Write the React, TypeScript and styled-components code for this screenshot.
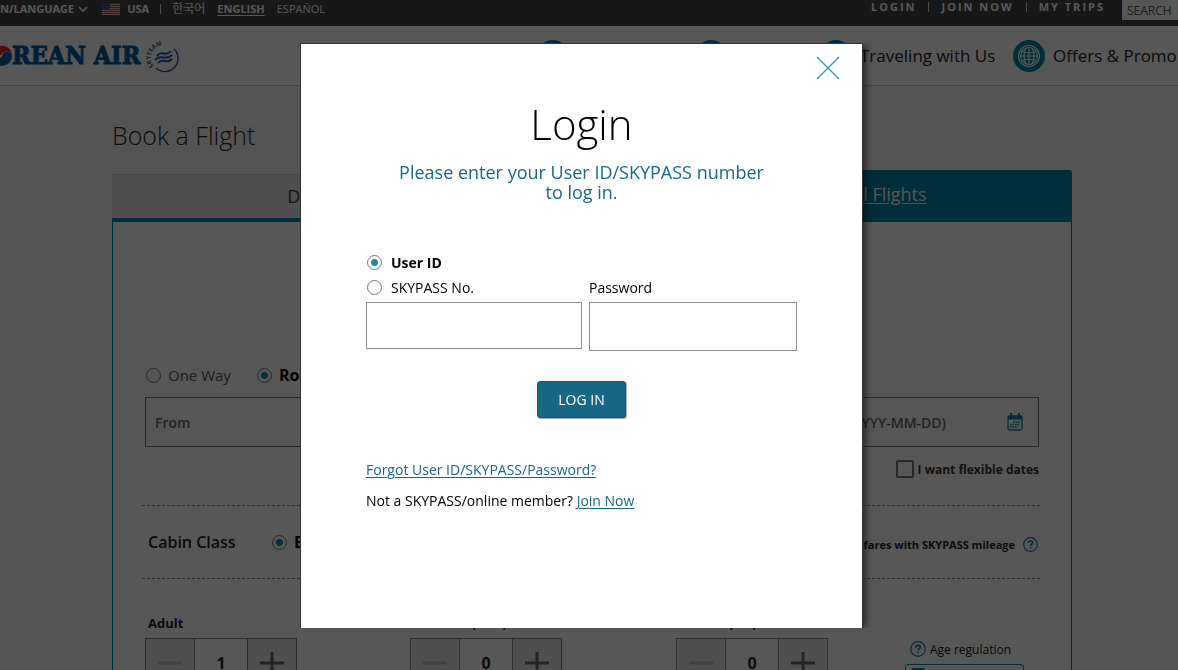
import React from "react";
import styled, { createGlobalStyle, css } from "styled-components";

const teal = "#0083a8";

const GlobalStyle = createGlobalStyle`
  *, *::before, *::after { box-sizing: border-box; }
  body {
    margin: 0;
    overflow: hidden;
    background: #f6f6f6;
    font-family: "Open Sans", "Noto Sans CJK KR", sans-serif;
    font-size: 14px;
    color: #222;
  }
  button, input { font-family: inherit; }
  h1, h2, p, ul, fieldset { margin: 0; padding: 0; border: 0; }
`;

const Page = styled.div`
  min-height: 100vh;
  overflow: hidden;
`;

/* Utility bar */
const TopBar = styled.div`
  display: flex;
  align-items: flex-start;
  height: 26px;
  background: #444;
  font-size: 11px;
  line-height: 18px;
  color: #fff;
  white-space: nowrap;
  overflow: hidden;
`;

const RegionButton = styled.button`
  display: flex;
  align-items: center;
  gap: 4px;
  padding: 0;
  margin-right: 14px;
  border: 0;
  background: none;
  color: inherit;
  font-size: 11px;
  font-weight: 700;
  line-height: 18px;
`;

const Country = styled.span`
  display: flex;
  align-items: center;
  gap: 7px;
  font-weight: 700;
`;

const Divider = styled.span<{ $space: number }>`
  width: 1px;
  height: 10px;
  margin: 4px ${(p) => p.$space}px 0;
  background: #ddd;
`;

const TopLink = styled.a<{ $active?: boolean }>`
  margin-right: 12px;
  color: inherit;
  font-weight: ${(p) => (p.$active ? 700 : 400)};
  text-decoration: ${(p) => (p.$active ? "underline" : "none")};
  text-underline-offset: 2px;
  &:lang(ko) { font-size: 12px; }
`;

const AccountLinks = styled.nav`
  display: flex;
  margin-left: auto;
  line-height: 14px;
`;

const AccountLink = styled.a`
  color: inherit;
  font-weight: 700;
  letter-spacing: 2px;
  text-decoration: none;
`;

const AccountDivider = styled(Divider)`
  margin-top: 2px;
`;

const Search = styled.input`
  width: 56px;
  height: 20px;
  margin-left: 17px;
  padding: 0 0 0 5px;
  border: 0;
  border-radius: 0;
  background: #fff;
  font-size: 12px;
  &::placeholder { color: #555; opacity: 1; }
`;

/* Header */
const Header = styled.header`
  display: flex;
  align-items: center;
  height: 60px;
  border-bottom: 1px solid #c4c4c4;
  background: #fff;
  overflow: hidden;
`;

const Logo = styled.a`
  display: flex;
  flex: none;
  align-items: center;
  width: 180px;
  color: #005a9e;
  font: 700 25px/30px "DejaVu Serif Condensed", "DejaVu Serif", serif;
  -webkit-text-stroke: 1px #005a9e;
  text-decoration: none;
  white-space: nowrap;
`;

const AllianceMark = styled.svg`
  margin-left: 6px;
  overflow: visible;
  -webkit-text-stroke: 0;
`;

const MainNav = styled.nav`
  display: grid;
  flex: none;
  grid-template-columns: 158px 125px 193px auto;
  margin-left: 357px;
`;

const NavLink = styled.a`
  display: flex;
  align-items: center;
  gap: 8px;
  color: #222;
  font-size: 17px;
  text-decoration: none;
  white-space: nowrap;
`;

/* Booking widget */
const Main = styled.main`
  padding: 30px 106px 0 112px;
`;

const PageTitle = styled.h1`
  height: 54px;
  font-size: 25px;
  font-weight: 300;
  line-height: 39px;
`;

const Tabs = styled.div`
  display: grid;
  grid-template-columns: 1fr 1fr;
  align-items: end;
  height: 52px;
`;

const Tab = styled.button<{ $filled?: boolean }>`
  border: 0;
  font-size: 18px;
  ${(p) =>
    p.$filled
      ? css`
          height: 52px;
          padding: 0 0 4px 22px;
          border-radius: 0 3px 0 0;
          background: ${teal};
          color: #fff;
          text-decoration: underline;
          text-underline-offset: 2px;
        `
      : css`
          height: 48px;
          padding: 0 0 2px 8px;
          border-top: 1px solid #dadada;
          border-bottom: 4px solid ${teal};
          background: #e7e7e7;
          color: #333;
        `}
`;

const Panel = styled.section`
  padding: 141px 31px 20px 29px;
  border: solid ${teal};
  border-width: 0 1px;
  background: #fff;
`;

const Radio = styled.input.attrs({ type: "radio" })`
  appearance: none;
  flex: none;
  width: 15px;
  height: 15px;
  margin: 0;
  border: 1px solid #777;
  border-radius: 50%;
  background: #fff;
  &:checked {
    background: radial-gradient(circle, #178aab 0 3px, #fff 4px);
  }
`;

const TripTypes = styled.div`
  display: flex;
  gap: 26px;
  padding-left: 4px;
`;

const Choice = styled.label`
  display: flex;
  align-items: center;
  gap: 7px;
  color: #555;
  font-size: 15px;
  line-height: 24px;
  white-space: nowrap;
  &:has(:checked) {
    color: #000;
    font-size: 16px;
    font-weight: 700;
  }
`;

const RouteFields = styled.div`
  display: flex;
  height: 50px;
  margin: 10px 1px 10px 3px;
  border: 1px solid #777;
`;

const RouteInput = styled.input<{ $end?: boolean }>`
  flex: 1;
  min-width: 0;
  padding: 0 9px;
  border: 0;
  background: none;
  font-size: 14px;
  font-weight: 600;
  text-align: ${(p) => (p.$end ? "right" : "left")};
  &::placeholder { color: #666; opacity: 1; }
`;

const CalendarButton = styled.button`
  display: flex;
  align-items: center;
  justify-content: flex-end;
  width: 83px;
  padding: 0 15px 0 0;
  border: 0;
  background: none;
`;

const FlexibleDates = styled.label`
  display: flex;
  align-items: center;
  justify-content: flex-end;
  gap: 4px;
  height: 24px;
  padding-right: 1px;
  margin-bottom: 24px;
  color: #333;
  font-size: 12px;
  font-weight: 700;
`;

const CheckBox = styled.input.attrs({ type: "checkbox" })`
  appearance: none;
  width: 18px;
  height: 18px;
  margin: 0;
  border: 2px solid #777;
  border-radius: 2px;
`;

const CabinRow = styled.div`
  display: flex;
  align-items: center;
  height: 74px;
  padding: 0 2px 0 6px;
  border: dashed #888;
  border-width: 1px 0;
`;

const CabinTitle = styled.h2`
  width: 124px;
  font-size: 16px;
  font-weight: 600;
`;

const Mileage = styled.span`
  display: flex;
  align-items: center;
  gap: 8px;
  margin-left: auto;
  padding-top: 4px;
  font-size: 11px;
  font-weight: 700;
`;

const Passengers = styled.div`
  display: grid;
  grid-template-columns: 265px 266px 1fr;
  padding: 34px 0 0 3px;
`;

const Passenger = styled.fieldset`
  min-width: 0;
`;

const PassengerLabel = styled.label`
  display: block;
  height: 25px;
  padding-left: 3px;
  font-size: 13px;
  font-weight: 700;
  line-height: 20px;
`;

const Stepper = styled.div`
  display: grid;
  grid-template-columns: 48px 54px 48px;
  width: 152px;
  height: 50px;
  border: 1px solid #888;
`;

const StepButton = styled.button`
  display: flex;
  align-items: center;
  justify-content: center;
  padding: 0;
  border: 0;
  background: #e8e8e8;
  color: #666;
  &:disabled { color: #bbb; }
`;

const Count = styled.input`
  min-width: 0;
  padding: 0;
  border: solid #888;
  border-width: 0 1px;
  border-radius: 0;
  background: none;
  color: #222;
  font-size: 16px;
  font-weight: 700;
  text-align: center;
`;

const LastPassenger = styled.div`
  display: flex;
  justify-content: space-between;
`;

const Regulations = styled.div`
  display: flex;
  flex-direction: column;
  width: 119px;
  margin-right: 16px;
  padding-top: 26px;
`;

const AgeLink = styled.a`
  display: flex;
  align-items: center;
  gap: 4px;
  height: 20px;
  padding-left: 5px;
  margin-bottom: 5px;
  color: #111;
  font-size: 12px;
  text-decoration: none;
  white-space: nowrap;
`;

const InfoButton = styled.button`
  display: flex;
  height: 32px;
  padding: 3px 5px;
  border: 1px solid ${teal};
  border-radius: 3px;
  background: #fff;
`;

/* Login dialog */
const Backdrop = styled.div`
  position: fixed;
  inset: 0;
  display: flex;
  align-items: flex-start;
  justify-content: center;
  padding: 44px 15px 0 0;
  background:
    linear-gradient(
      135deg,
      rgba(255, 255, 255, 0.08) 12%,
      transparent 12% 50%,
      rgba(255, 255, 255, 0.08) 50% 62%,
      transparent 62%
    ) 0 0 / 4px 4px,
    rgba(0, 0, 0, 0.66);
`;

const Dialog = styled.div`
  position: relative;
  width: 561px;
  min-height: 584px;
  padding: 51px 65px 20px;
  background: #fff;
  color: #000;
  box-shadow: 0 0 0 1px #333, 4px 0 8px rgba(0, 0, 0, 0.55);
  clip-path: inset(-1px -12px 0 -1px);
`;

const CloseButton = styled.button`
  position: absolute;
  top: 12px;
  right: 22px;
  display: flex;
  padding: 0;
  border: 0;
  background: none;
`;

const DialogTitle = styled.h2`
  font-size: 42px;
  font-weight: 300;
  line-height: 57px;
  text-align: center;
`;

const DialogText = styled.p`
  margin: 10px 0 48px;
  color: #176785;
  font-size: 18px;
  line-height: 20px;
  text-align: center;
`;

const Credentials = styled.div`
  display: grid;
  grid-template-columns: 216px 208px;
  align-items: start;
  column-gap: 7px;
`;

const LoginChoice = styled(Choice)`
  gap: 9px;
  height: 25px;
  padding-left: 1px;
  color: #000;
  &, &:has(:checked) { font-size: 14px; }
`;

const IdTypes = styled.fieldset`
  min-width: 0;
  padding-bottom: 2px;
`;

const PasswordLabel = styled.label`
  align-self: end;
  padding-bottom: 2px;
  line-height: 25px;
`;

const TextField = styled.input<{ $tall?: boolean }>`
  width: 100%;
  height: ${(p) => (p.$tall ? 49 : 47)}px;
  padding: 0 10px;
  border: 1px solid #8f8f8f;
  border-radius: 0;
  font-size: 14px;
`;

const SubmitButton = styled.button`
  display: block;
  height: 37px;
  margin: 30px auto 42px;
  padding: 0 20px;
  border: 1px solid #0f5670;
  border-radius: 3px;
  background: #176785;
  box-shadow: 1px 1px 1px rgba(0, 0, 0, 0.35);
  color: #fff;
  font-size: 14px;
`;

const HelpLine = styled.p`
  margin-bottom: 11px;
  line-height: 20px;
`;

const HelpLink = styled.a`
  color: #176785;
  text-underline-offset: 2px;
`;

const Chevron = () => (
  <svg width="10" height="7" viewBox="0 0 10 7" fill="none" stroke="currentColor" strokeWidth="1.6">
    <path d="M1 1l4 4 4-4" />
  </svg>
);

const Flag = () => (
  <svg width="18" height="12" viewBox="0 0 18 12">
    <rect width="18" height="12" fill="#f3c4c4" />
    <path d="M0 .5h18M0 2.5h18M0 4.5h18M0 6.5h18M0 8.5h18M0 10.5h18" stroke="#d9304a" strokeWidth="1" />
    <rect width="8" height="6" fill="#3a4f9c" />
  </svg>
);

const Taegeuk = () => (
  <svg width="12" height="22" viewBox="0 0 12 22">
    <path d="M0 1C7 0 12 5 12 11c-1-4-5-6-8-4-2 1-2 3-4 3z" fill="#d8203a" />
    <path d="M12 11c0 6-5 10-12 10v-8c3-1 2-5 5-6 3-1 6 1 7 4z" fill="#005a9e" />
  </svg>
);

const SkyTeamMark = () => (
  <AllianceMark width="31" height="32" viewBox="0 0 31 32" fill="none" stroke="#28579c">
    <defs>
      <path id="alliance-arc" d="M8 26A11 11 0 0 1 25 9" />
    </defs>
    <text fill="#28579c" stroke="none" fontSize="6" fontWeight="700" fontFamily="Open Sans, sans-serif">
      <textPath href="#alliance-arc">SKYTEAM</textPath>
    </text>
    <path d="M28 9A13 13 0 0 1 10 28" strokeWidth="1.4" />
    <path d="M11 16c5-7 8 2 14-5M9 20c6-7 10 2 17-5M12 23c5-6 8 2 14-4" strokeWidth="1.9" />
  </AllianceMark>
);

const RoundIcon = ({ globe = false }: { globe?: boolean }) => (
  <svg width="32" height="32" viewBox="0 0 32 32" fill="none" stroke="#fff" strokeWidth="1.1">
    <circle cx="16" cy="16" r="16" fill={teal} stroke="none" />
    {globe && (
      <>
        <circle cx="16" cy="16" r="10.5" />
        <circle cx="16" cy="16" r="8.5" />
        <path d="M16 7.500v17M7.500 16h17M9 11.500q7 2.500 14 0M9 20.500q7-2.500 14 0" />
        <path d="M13 8q-4 8 0 16M19 8q4 8 0 16" />
      </>
    )}
  </svg>
);

const CalendarIcon = () => (
  <svg width="16" height="18" viewBox="0 0 16 18" fill="none" stroke={teal}>
    <rect x="1" y="3" width="14" height="14" rx="1.500" strokeWidth="1.300" />
    <path d="M1 5h14" strokeWidth="3" />
    <path d="M4 0v4M12 0v4" strokeWidth="2" />
    <path d="M6 9h7M3 11.500h10M3 14h8" strokeWidth="1.700" strokeDasharray="1.700 .8" />
  </svg>
);

const HelpIcon = ({ size }: { size: number }) => (
  <svg width={size} height={size} viewBox="0 0 16 16" fill="none" stroke={teal}>
    <circle cx="8" cy="8" r="7.300" strokeWidth="1.200" />
    <path d="M5.800 6.500c0-3 4.500-2.700 4.500-.3 0 1.600-2.200 1.500-2.200 3.300M8.100 10.700v1.600" strokeWidth="1.700" />
  </svg>
);

const StepIcon = ({ plus = false }: { plus?: boolean }) => (
  <svg width="24" height="24" viewBox="0 0 24 24" stroke="currentColor" strokeWidth="3">
    <path d={plus ? "M0 12h24M12 1v22" : "M0 12h24"} />
  </svg>
);

const CloseIcon = () => (
  <svg width="24" height="24" viewBox="0 0 24 24" stroke="#2b96b5" strokeWidth="1.300">
    <path d="M1 1l22 22M23 1L1 23" />
  </svg>
);

const NoteIcon = () => (
  <svg width="14" height="14" viewBox="0 0 14 14" fill="none" stroke={teal} strokeWidth="2">
    <rect x="1" y="1" width="12" height="12" rx="1" />
    <path d="M4 5h6M4 9h6" />
  </svg>
);

type CounterProps = { id: string; label: string; value: number };

const Counter = ({ id, label, value }: CounterProps) => (
  <Passenger>
    <PassengerLabel htmlFor={id}>{label}</PassengerLabel>
    <Stepper>
      <StepButton type="button" disabled aria-label={`Fewer: ${label}`}>
        <StepIcon />
      </StepButton>
      <Count id={id} defaultValue={value} />
      <StepButton type="button" aria-label={`More: ${label}`}>
        <StepIcon plus />
      </StepButton>
    </Stepper>
  </Passenger>
);

const LoginDialog = () => (
  <Backdrop>
    <Dialog role="dialog" aria-modal="true" aria-labelledby="login-title">
      <CloseButton type="button" aria-label="Close">
        <CloseIcon />
      </CloseButton>
      <DialogTitle id="login-title">Login</DialogTitle>
      <DialogText>
        Please enter your User ID/SKYPASS number
        <br />
        to log in.
      </DialogText>
      <form onSubmit={(e) => e.preventDefault()}>
        <Credentials>
          <IdTypes>
            <LoginChoice>
              <Radio name="id-type" defaultChecked />
              User ID
            </LoginChoice>
            <LoginChoice>
              <Radio name="id-type" />
              SKYPASS No.
            </LoginChoice>
          </IdTypes>
          <PasswordLabel htmlFor="password">Password</PasswordLabel>
          <TextField type="text" aria-label="User ID" />
          <TextField id="password" type="password" $tall />
        </Credentials>
        <SubmitButton type="submit">LOG IN</SubmitButton>
      </form>
      <HelpLine>
        <HelpLink href="#forgot">Forgot User ID/SKYPASS/Password?</HelpLink>
      </HelpLine>
      <HelpLine>
        Not a SKYPASS/online member? <HelpLink href="#join">Join Now</HelpLink>
      </HelpLine>
    </Dialog>
  </Backdrop>
);

export default function App() {
  return (
    <Page>
      <GlobalStyle />
      <TopBar>
        <RegionButton type="button">
          N/LANGUAGE
          <Chevron />
        </RegionButton>
        <Country>
          <Flag />
          USA
        </Country>
        <Divider $space={11} />
        <TopLink href="#ko" lang="ko">한국어</TopLink>
        <TopLink href="#en" $active>ENGLISH</TopLink>
        <TopLink href="#es">ESPAÑOL</TopLink>
        <AccountLinks>
          <AccountLink href="#login">LOGIN</AccountLink>
          <AccountDivider $space={12} />
          <AccountLink href="#join">JOIN NOW</AccountLink>
          <AccountDivider $space={12} />
          <AccountLink href="#trips">MY TRIPS</AccountLink>
        </AccountLinks>
        <Search type="text" placeholder="SEARCH" aria-label="Search" />
      </TopBar>
      <Header>
        <Logo href="#home">
          <Taegeuk />
          REAN AIR
          <SkyTeamMark />
        </Logo>
        <MainNav>
          <NavLink href="#plan" aria-label="Plan"><RoundIcon /></NavLink>
          <NavLink href="#manage" aria-label="Manage"><RoundIcon /></NavLink>
          <NavLink href="#traveling"><RoundIcon />Traveling with Us</NavLink>
          <NavLink href="#offers"><RoundIcon globe />Offers &amp; Promo</NavLink>
        </MainNav>
      </Header>
      <Main>
        <PageTitle>Book a Flight</PageTitle>
        <Tabs>
          <Tab type="button">Domestic Flights</Tab>
          <Tab type="button" $filled>International Flights</Tab>
        </Tabs>
        <Panel>
          <TripTypes>
            <Choice>
              <Radio name="trip" />
              One Way
            </Choice>
            <Choice>
              <Radio name="trip" defaultChecked />
              Round Trip
            </Choice>
          </TripTypes>
          <RouteFields>
            <RouteInput placeholder="From" aria-label="From" />
            <RouteInput placeholder="(YYYY-MM-DD)" aria-label="Dates" $end />
            <CalendarButton type="button" aria-label="Open calendar">
              <CalendarIcon />
            </CalendarButton>
          </RouteFields>
          <FlexibleDates>
            <CheckBox />
            I want flexible dates
          </FlexibleDates>
          <CabinRow>
            <CabinTitle>Cabin Class</CabinTitle>
            <Choice>
              <Radio name="cabin" defaultChecked />
              Economy
            </Choice>
            <Mileage>
              fares with SKYPASS mileage
              <HelpIcon size={15} />
            </Mileage>
          </CabinRow>
          <Passengers>
            <Counter id="adult" label="Adult" value={1} />
            <Counter id="child" label="Children (2-11)" value={0} />
            <LastPassenger>
              <Counter id="infant" label="Infants (0-1)" value={0} />
              <Regulations>
                <AgeLink href="#age">
                  <HelpIcon size={16} />
                  Age regulation
                </AgeLink>
                <InfoButton type="button" aria-label="Passenger information">
                  <NoteIcon />
                </InfoButton>
              </Regulations>
            </LastPassenger>
          </Passengers>
        </Panel>
      </Main>
      <LoginDialog />
    </Page>
  );
}
